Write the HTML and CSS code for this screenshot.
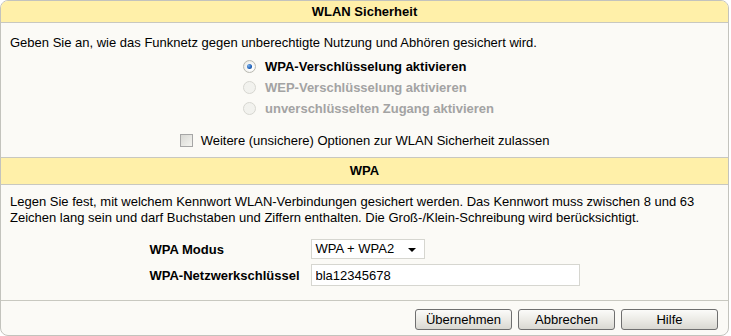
FILE: index.html
```html
<!DOCTYPE html>
<html lang="de">
<head>
  <meta charset="UTF-8" />
  <title>WLAN Sicherheit</title>
  <link rel="stylesheet" href="styles.css">
</head>
<body>

  <div class="box">
    <div class="head">WLAN Sicherheit</div>
    <div class="section">
      <p class="intro">Geben Sie an, wie das Funknetz gegen unberechtigte Nutzung und Abhören gesichert wird.</p>
      <div class="radios">
        <label class="radio on"><span class="dot"></span>WPA-Verschlüsselung aktivieren</label>
        <label class="radio off"><span class="dot"></span>WEP-Verschlüsselung aktivieren</label>
        <label class="radio off"><span class="dot"></span>unverschlüsselten Zugang aktivieren</label>
      </div>
      <div class="check">
        <label><span class="box-check"></span>Weitere (unsichere) Optionen zur WLAN Sicherheit zulassen</label>
      </div>
    </div>

    <div class="head second">WPA</div>
    <div class="section">
      <p class="intro tight">Legen Sie fest, mit welchem Kennwort WLAN-Verbindungen gesichert werden. Das Kennwort muss zwischen 8 und 63<br>Zeichen lang sein und darf Buchstaben und Ziffern enthalten. Die Groß-/Klein-Schreibung wird berücksichtigt.</p>
      <div class="form">
        <div class="row">
          <span class="lbl">WPA Modus</span>
          <div class="select">WPA + WPA2<span class="arrow"></span></div>
        </div>
        <div class="row">
          <span class="lbl">WPA-Netzwerkschlüssel</span>
          <input type="text" class="key" value="bla12345678" />
        </div>
      </div>
    </div>

    <div class="buttons">
      <button>Übernehmen</button>
      <button>Abbrechen</button>
      <button>Hilfe</button>
    </div>
  </div>

</body>
</html>
```

FILE: styles.css
```css
* {
  margin: 0; padding: 0; box-sizing: border-box;
  font-family: 'Liberation Sans', Arial, sans-serif;
}

body {
  background: #ffffff;
  font-size: 13px;
  color: #000;
}

.box {
  width: 729px;
  height: 336px;
  border: 1px solid #c3c3bd;
  border-radius: 8px;
  background: #fbfaf6;
  overflow: hidden;
  display: flex;
  flex-direction: column;
}

.head {
  background: #fff0a9;
  height: 22px;
  line-height: 22px;
  text-align: center;
  font-weight: bold;
  border-bottom: 1px solid #c8c8c0;
}

.head.second {
  height: 28px;
  line-height: 26px;
  border-top: 1px solid #c8c8c0;
}

.intro {
  padding: 12px 10px 0 9px;
  line-height: 16px;
}

.intro.tight {
  padding-top: 9px;
}

.radios {
  padding: 5px 0 0 242px;
  display: flex;
  flex-direction: column;
}

.radio {
  display: flex;
  align-items: center;
  height: 21px;
  font-weight: bold;
}

.radio.off {
  color: #a3a3a3;
}

.dot {
  width: 13px;
  height: 13px;
  border-radius: 50%;
  border: 1px solid #b8b8b0;
  background: radial-gradient(circle at 60% 60%, #ffffff 20%, #e6e6e0 90%);
  margin-right: 9px;
  position: relative;
}

.radio.off .dot {
  border-color: #d6d6d0;
  background: #f2f2ee;
}

.radio.on .dot::after {
  content: "";
  position: absolute;
  left: 3px; top: 3px;
  width: 5px; height: 5px;
  border-radius: 50%;
  background: radial-gradient(circle at 35% 35%, #7fb2ea 0%, #1c5fb8 60%, #123f80 100%);
}

.check {
  text-align: center;
  padding: 14px 0 7px;
}

.check label {
  display: inline-flex;
  align-items: center;
}

.box-check {
  width: 13px;
  height: 13px;
  border: 1px solid #a6a6a6;
  background: linear-gradient(135deg, #d8d8d4, #f4f4f0);
  margin-right: 8px;
}

.form {
  display: flex;
  flex-direction: column;
  align-items: center;
  padding: 13px 0 14px 0;
  gap: 5px;
}

.row {
  display: flex;
  align-items: center;
  width: 430px;
}

.lbl {
  width: 161px;
  font-weight: bold;
}

.select {
  width: 114px;
  height: 20px;
  border: 1px solid #d6d6d0;
  background: #fff;
  padding-left: 4px;
  line-height: 18px;
  position: relative;
}

.arrow {
  position: absolute;
  right: 8px;
  top: 8px;
  border-left: 4px solid transparent;
  border-right: 4px solid transparent;
  border-top: 4px solid #000;
}

.key {
  width: 269px;
  height: 22px;
  border: 1px solid #d6d6d0;
  background: #fff;
  padding-left: 4px;
  font-size: 13px;
  outline: none;
}

.buttons {
  border-top: 1px solid #c8c8c0;
  display: flex;
  justify-content: flex-end;
  gap: 6px;
  padding: 8px 10px 0 0;
}

button {
  width: 97px;
  height: 21px;
  border: 1px solid #6f6f6f;
  border-radius: 3px;
  background: linear-gradient(#fbfbf9 0%, #ecebe6 50%, #d9d8d2 100%);
  font-size: 13px;
  color: #000;
}
```
